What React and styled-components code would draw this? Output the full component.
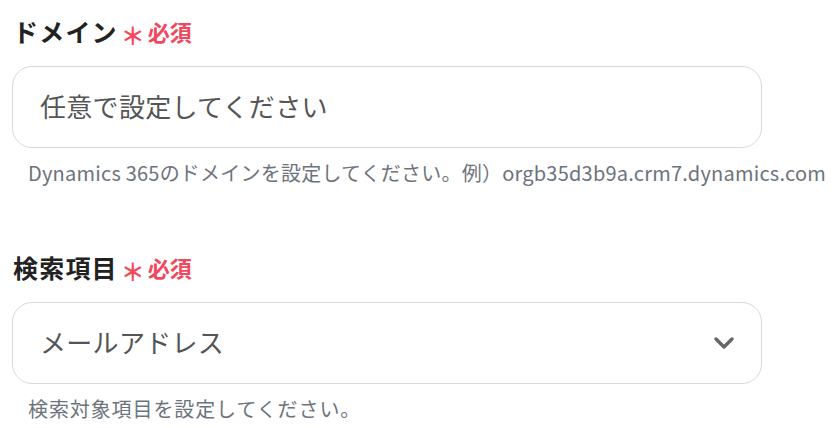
import React from "react";
import styled, { createGlobalStyle } from "styled-components";

const Global = createGlobalStyle`
  html, body { margin: 0; padding: 0; background: #fff; }
  body { font-family: "Noto Sans CJK JP", "Noto Sans", sans-serif; }
`;

const Page = styled.div`
  display: flex;
  flex-direction: column;
  gap: 64px;
  padding: 14px 0 0 12px;
  width: 837px;
  box-sizing: border-box;
`;

const Field = styled.div`
  display: flex;
  flex-direction: column;
`;

const LabelRow = styled.div`
  display: flex;
  align-items: center;
  height: 34px;
  padding-left: 1px;
  margin-bottom: 18px;
`;

const Label = styled.span`
  font-size: 25px;
  font-weight: 700;
  color: #222;
  letter-spacing: 1.2px;
`;

const Star = styled.span`
  color: #f2485d;
  font-size: 24px;
  font-weight: 700;
  line-height: 1;
  margin: 8px 3px 0 3px;
`;

const Required = styled.span`
  color: #f2485d;
  font-size: 22px;
  font-weight: 700;
`;

const Box = styled.div`
  width: 750px;
  height: 82px;
  box-sizing: border-box;
  border: 1px solid #d6d9df;
  border-radius: 20px;
  display: flex;
  align-items: center;
  justify-content: space-between;
  padding: 0 26px 4px 27px;
  font-size: 26px;
  color: #555;
  letter-spacing: 0.3px;
`;

const ChevronWrap = styled.span`
  display: flex;
  margin-top: 4px;
`;

const Hint = styled.div`
  margin-top: 12px;
  padding-left: 16px;
  font-size: 20px;
  color: #6d737c;
  line-height: 26px;
  white-space: nowrap;
  letter-spacing: ${(p) => p.$spacing || "0.22px"};
`;

const Chevron = () => (
  <ChevronWrap>
    <svg width="22" height="14" viewBox="0 0 22 14" fill="none">
      <path d="M3 3 L11 11 L19 3" stroke="#666" strokeWidth="3.4" strokeLinecap="round" strokeLinejoin="round" />
    </svg>
  </ChevronWrap>
);

export default function App() {
  return (
    <>
      <Global />
      <Page>
        <Field>
          <LabelRow>
            <Label>ドメイン</Label>
            <Star>＊</Star>
            <Required>必須</Required>
          </LabelRow>
          <Box>任意で設定してください</Box>
          <Hint>Dynamics 365のドメインを設定してください。例）orgb35d3b9a.crm7.dynamics.com</Hint>
        </Field>
        <Field>
          <LabelRow>
            <Label>検索項目</Label>
            <Star>＊</Star>
            <Required>必須</Required>
          </LabelRow>
          <Box>
            メールアドレス
            <Chevron />
          </Box>
          <Hint $spacing="0.9px">検索対象項目を設定してください。</Hint>
        </Field>
      </Page>
    </>
  );
}
